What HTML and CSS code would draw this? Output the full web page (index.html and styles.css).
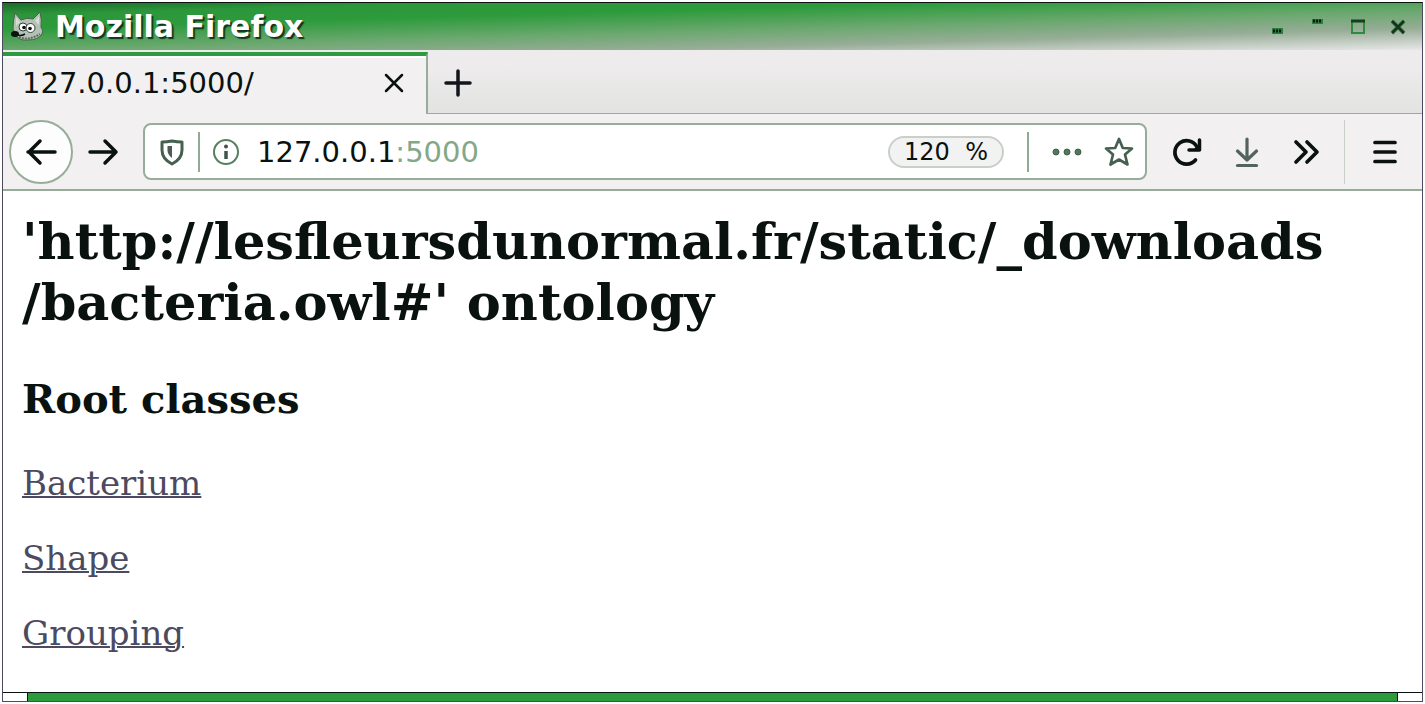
FILE: index.html
```html
<!DOCTYPE html>
<html lang="en">
<head>
<meta charset="utf-8">
<title>Mozilla Firefox</title>
<link rel="stylesheet" href="styles.css">
</head>
<body>
<div class="window">
  <header class="titlebar">
    <svg class="app-icon" width="32" height="30" viewBox="0 0 32 30" aria-hidden="true">
      <path d="M4 1L10 8Q16 5 22 7L29 0Q31 8 30 15Q33 19 31 22Q27 28 17 28Q8 29 5 23L2 17Q2 9 4 1Z" fill="#b4c2b5" stroke="#4b5f50" stroke-width="1"/>
      <path d="M5 5L9 10L5 14ZM28 4L24 9L28 13Z" fill="#d5ddd5"/>
      <path d="M8 25Q18 29 29 22" fill="none" stroke="#5d6b62" stroke-width="2" stroke-dasharray="2 1"/>
      <circle cx="12" cy="15" r="4" fill="#fff" stroke="#333d38"/>
      <circle cx="19.500" cy="16" r="4.500" fill="#fff" stroke="#333d38"/>
      <circle cx="13" cy="15.500" r="1.800" fill="#08120e"/>
      <circle cx="19" cy="16.500" r="1.800" fill="#08120e"/>
      <path d="M5 22Q9 25 14 22" fill="none" stroke="#08120e" stroke-width="1.500"/>
      <ellipse cx="4" cy="22" rx="4" ry="3" fill="#08120e"/>
    </svg>
    <h1 class="window-title">Mozilla Firefox</h1>
    <div class="window-controls">
      <button class="window-button" aria-label="Minimize"><svg width="16" height="20" viewBox="0 0 16 20"><rect x="2" y="11" width="11" height="6" fill="#25813a"/><path d="M3 14h9" stroke="#0a150f" stroke-width="3" stroke-dasharray="2 1"/></svg></button>
      <button class="window-button" aria-label="Shade"><svg width="16" height="20" viewBox="0 0 16 20"><rect x="2" y="2" width="11" height="5" fill="#25813a"/><path d="M3 4h9" stroke="#0a150f" stroke-width="3" stroke-dasharray="2 1"/></svg></button>
      <button class="window-button" aria-label="Maximize"><svg width="16" height="20" viewBox="0 0 16 20"><rect x="2" y="4" width="12" height="12" fill="none" stroke="#2c8b3d" stroke-width="2"/><path d="M1 4h14" stroke="#153d20" stroke-width="3"/></svg></button>
      <button class="window-button" aria-label="Close window"><svg width="16" height="20" viewBox="0 0 16 20"><path d="M2 4L14 16M14 4L2 16" stroke="#3b8b4a" stroke-width="4"/><path d="M2 4L14 16M14 4L2 16" stroke="#17331f" stroke-width="2.500"/></svg></button>
    </div>
  </header>

  <div class="tabstrip">
    <div class="tab">
      <span class="tab-label">127.0.0.1:5000/</span>
      <button class="tab-close" aria-label="Close tab"><svg width="20" height="20" viewBox="0 0 20 20"><path d="M2 2L18 18M18 2L2 18" stroke="#0a120f" stroke-width="2.500" stroke-linecap="round"/></svg></button>
    </div>
    <button class="new-tab" aria-label="New tab"><svg width="28" height="28" viewBox="0 0 28 28"><path d="M14 2V26M2 14H26" stroke="#12151c" stroke-width="3.500" stroke-linecap="round"/></svg></button>
  </div>

  <nav class="toolbar">
    <button class="back" aria-label="Back"><svg width="32" height="28" viewBox="0 0 32 28"><path d="M30 14H3M15 3L4 14L15 25" fill="none" stroke="#0a120f" stroke-width="3.500" stroke-linecap="round" stroke-linejoin="round"/></svg></button>
    <button class="forward" aria-label="Forward"><svg width="32" height="28" viewBox="0 0 32 28"><path d="M2 14H28M17 3L28 14L17 25" fill="none" stroke="#0a120f" stroke-width="3.500" stroke-linecap="round" stroke-linejoin="round"/></svg></button>
    <div class="address">
      <svg class="shield" width="24" height="28" viewBox="0 0 24 28" aria-hidden="true"><path d="M12 3Q17 4 22 4V12Q22 21 12 26Q2 21 2 12V4Q7 4 12 3Z" fill="none" stroke="#46604f" stroke-width="3" stroke-linejoin="round"/><path d="M12 8V20Q8 17 7.500 13V8Z" fill="#4b5c55"/></svg>
      <span class="divider"></span>
      <svg class="info" width="28" height="28" viewBox="0 0 28 28" aria-hidden="true"><circle cx="14" cy="14" r="12" fill="none" stroke="#55805e" stroke-width="2"/><circle cx="14" cy="8.500" r="2" fill="#405448"/><path d="M14 13V21" stroke="#405448" stroke-width="3.500"/></svg>
      <div class="url" role="textbox" aria-label="Address" tabindex="0">127.0.0.1<span class="port">:5000</span></div>
      <button class="zoom">120&nbsp; %</button>
      <span class="divider"></span>
      <button class="page-actions" aria-label="Page actions"><svg width="32" height="12" viewBox="0 0 32 12"><g fill="#4f7a58" stroke="#435a4e" stroke-width="1"><circle cx="5" cy="6" r="3"/><circle cx="16" cy="6" r="3"/><circle cx="27" cy="6" r="3"/></g></svg></button>
      <button class="bookmark" aria-label="Bookmark this page"><svg width="32" height="32" viewBox="0 0 32 32"><path d="M16 3L19.800 12L29 12.500L22 18.500L24.500 28.500L16 23.500L7.500 28.500L10 18.500L3 12.500L12.200 12Z" fill="none" stroke="#46604f" stroke-width="2.700" stroke-linejoin="round"/></svg></button>
    </div>
    <div class="tools">
      <button class="tool" aria-label="Reload"><svg width="32" height="32" viewBox="0 0 32 32"><path d="M24.500 24A11.700 11.700 0 1 1 26 11" fill="none" stroke="#0a120f" stroke-width="3.700" stroke-linecap="round"/><path d="M28.500 4V14H18" fill="none" stroke="#0a120f" stroke-width="3.500" stroke-linecap="round" stroke-linejoin="round"/><path d="M28 8V14H22Z" fill="#0a120f"/></svg></button>
      <button class="tool" aria-label="Downloads"><svg width="32" height="32" viewBox="0 0 32 32"><path d="M16 3V24M6.500 15L16 24L25.500 15" fill="none" stroke="#53645c" stroke-width="3.200" stroke-linecap="round" stroke-linejoin="round"/><path d="M6.500 29.500H25.500" stroke="#53645c" stroke-width="3.200" stroke-linecap="round"/></svg></button>
      <button class="tool" aria-label="More tools"><svg width="32" height="32" viewBox="0 0 32 32"><path d="M5 6L15 16L5 26M16 6L26 16L16 26" fill="none" stroke="#0a120f" stroke-width="3.700" stroke-linecap="round" stroke-linejoin="round"/></svg></button>
    </div>
    <button class="menu" aria-label="Open menu"><svg width="32" height="32" viewBox="0 0 32 32"><path d="M6 6.500H26M6 16H26M6 25.500H26" stroke="#0a120f" stroke-width="3.700" stroke-linecap="round"/></svg></button>
  </nav>

  <main class="page">
    <h2 class="ontology">'http://lesfleursdunormal.fr/static/_downloads<wbr>/bacteria.owl#' ontology</h2>
    <h3 class="section">Root classes</h3>
    <p class="entry"><a href="#bacterium">Bacterium</a></p>
    <p class="entry"><a href="#shape">Shape</a></p>
    <p class="entry"><a href="#grouping">Grouping</a></p>
  </main>
  <footer class="resize-bar"></footer>
</div>
</body>
</html>
```
FILE: styles.css
```css
* { box-sizing: border-box; }

body {
  margin: 0;
  padding: 2px;
  background: #fff;
  color: #0a120f;
  font-family: "DejaVu Sans", sans-serif;
}

button {
  display: flex;
  align-items: center;
  justify-content: center;
  flex: none;
  padding: 0;
  border: 0;
  background: none;
  color: inherit;
  font-family: inherit;
}

svg { display: block; flex: none; }

.window {
  display: flex;
  flex-direction: column;
  min-height: calc(100vh - 4px);
  border: 1px solid #4b4a60;
  border-top-color: #0a120f;
}

.titlebar {
  display: flex;
  align-items: center;
  height: 47px;
  padding: 0 16px 0 8px;
  background: linear-gradient(178.4deg, #1c6b2b 0%, #2c963b 14%, #2c9b3b 30%, #6ba86f 55%, #97ad97 75%, #c8d0c8 90%, #e6e8e5 100%);
}

.window-title {
  flex: 1;
  margin: 0 0 0 12px;
  color: #fff;
  font-size: 30px;
  line-height: 36px;
  text-shadow: 2px 2px 1px #12351d;
}

.window-controls { display: flex; gap: 24px; }

.tabstrip {
  display: flex;
  height: 64px;
  background: linear-gradient(#edebeb 30%, #e2e3e2);
  border-bottom: 1px solid #97ad9a;
}

.tab {
  display: flex;
  align-items: center;
  justify-content: space-between;
  width: 425px;
  height: 62px;
  margin-top: 2px;
  padding: 0 22px 4px 19px;
  background: #f2f0f0;
  border-top: 4px solid #2f9b40;
  border-right: 2px solid #97ad9a;
  box-shadow: inset 0 2px #fff;
}

.tab-label { font-size: 29px; line-height: 36px; }

.new-tab {
  width: 60px;
  padding-top: 2px;
}

.toolbar {
  display: flex;
  align-items: center;
  height: 77px;
  padding: 0 21px 0 6px;
  background: #f2f0f0;
  border-bottom: 2px solid #97ad9a;
}

.back {
  width: 64px;
  height: 64px;
  border: 2px solid #97ad9a;
  border-radius: 50%;
  background: #fdfdfd;
}

.forward { width: 62px; }

.address {
  display: flex;
  flex: 1;
  align-items: center;
  min-width: 0;
  height: 57px;
  margin-left: 8px;
  padding: 0 10px 0 15px;
  background: #fff;
  border: 2px solid #97ad9a;
  border-radius: 8px;
}

.divider {
  flex: none;
  width: 2px;
  height: 40px;
  background: #8fab93;
}

.shield { margin-right: 14px; }

.info { margin: 0 17px 0 12px; }

.url {
  flex: 1;
  font-size: 29px;
  line-height: 36px;
}

.port { color: #83a888; }

.zoom {
  width: 116px;
  height: 32px;
  margin-right: 23px;
  border: 2px solid #c8d0c8;
  border-radius: 16px;
  background: #f3f2f2;
  font-size: 24px;
  line-height: 28px;
}

.page-actions { margin: 0 20px 0 22px; }

.tools {
  display: flex;
  gap: 28px;
  padding: 0 21px 0 24px;
}

.menu {
  height: 64px;
  padding-left: 24px;
  border-left: 1px solid #c8d0c8;
}

.page {
  flex: 1;
  padding: 20px 19px;
  font-family: "DejaVu Serif", serif;
}

.ontology {
  margin: 0 0 42px;
  font-size: 51px;
  line-height: 61px;
}

.section {
  margin: 0 0 40px;
  font-size: 40px;
  line-height: 48px;
}

.entry {
  margin: 0 0 35px;
  font-size: 34px;
  line-height: 40px;
}

.entry:last-child { margin-bottom: 0; }

.entry a {
  color: #4b4a60;
  text-decoration-thickness: 2px;
}

.resize-bar {
  height: 9px;
  border-top: 1px solid #0a120f;
  background: linear-gradient(#2c9b3b, #2c9b3b) center / calc(100% - 48px) 100% no-repeat #fff;
}

.resize-bar::before {
  content: "";
  display: block;
  height: 8px;
  margin: 0 24px;
  border: solid #0a120f;
  border-width: 0 1px;
}
```
